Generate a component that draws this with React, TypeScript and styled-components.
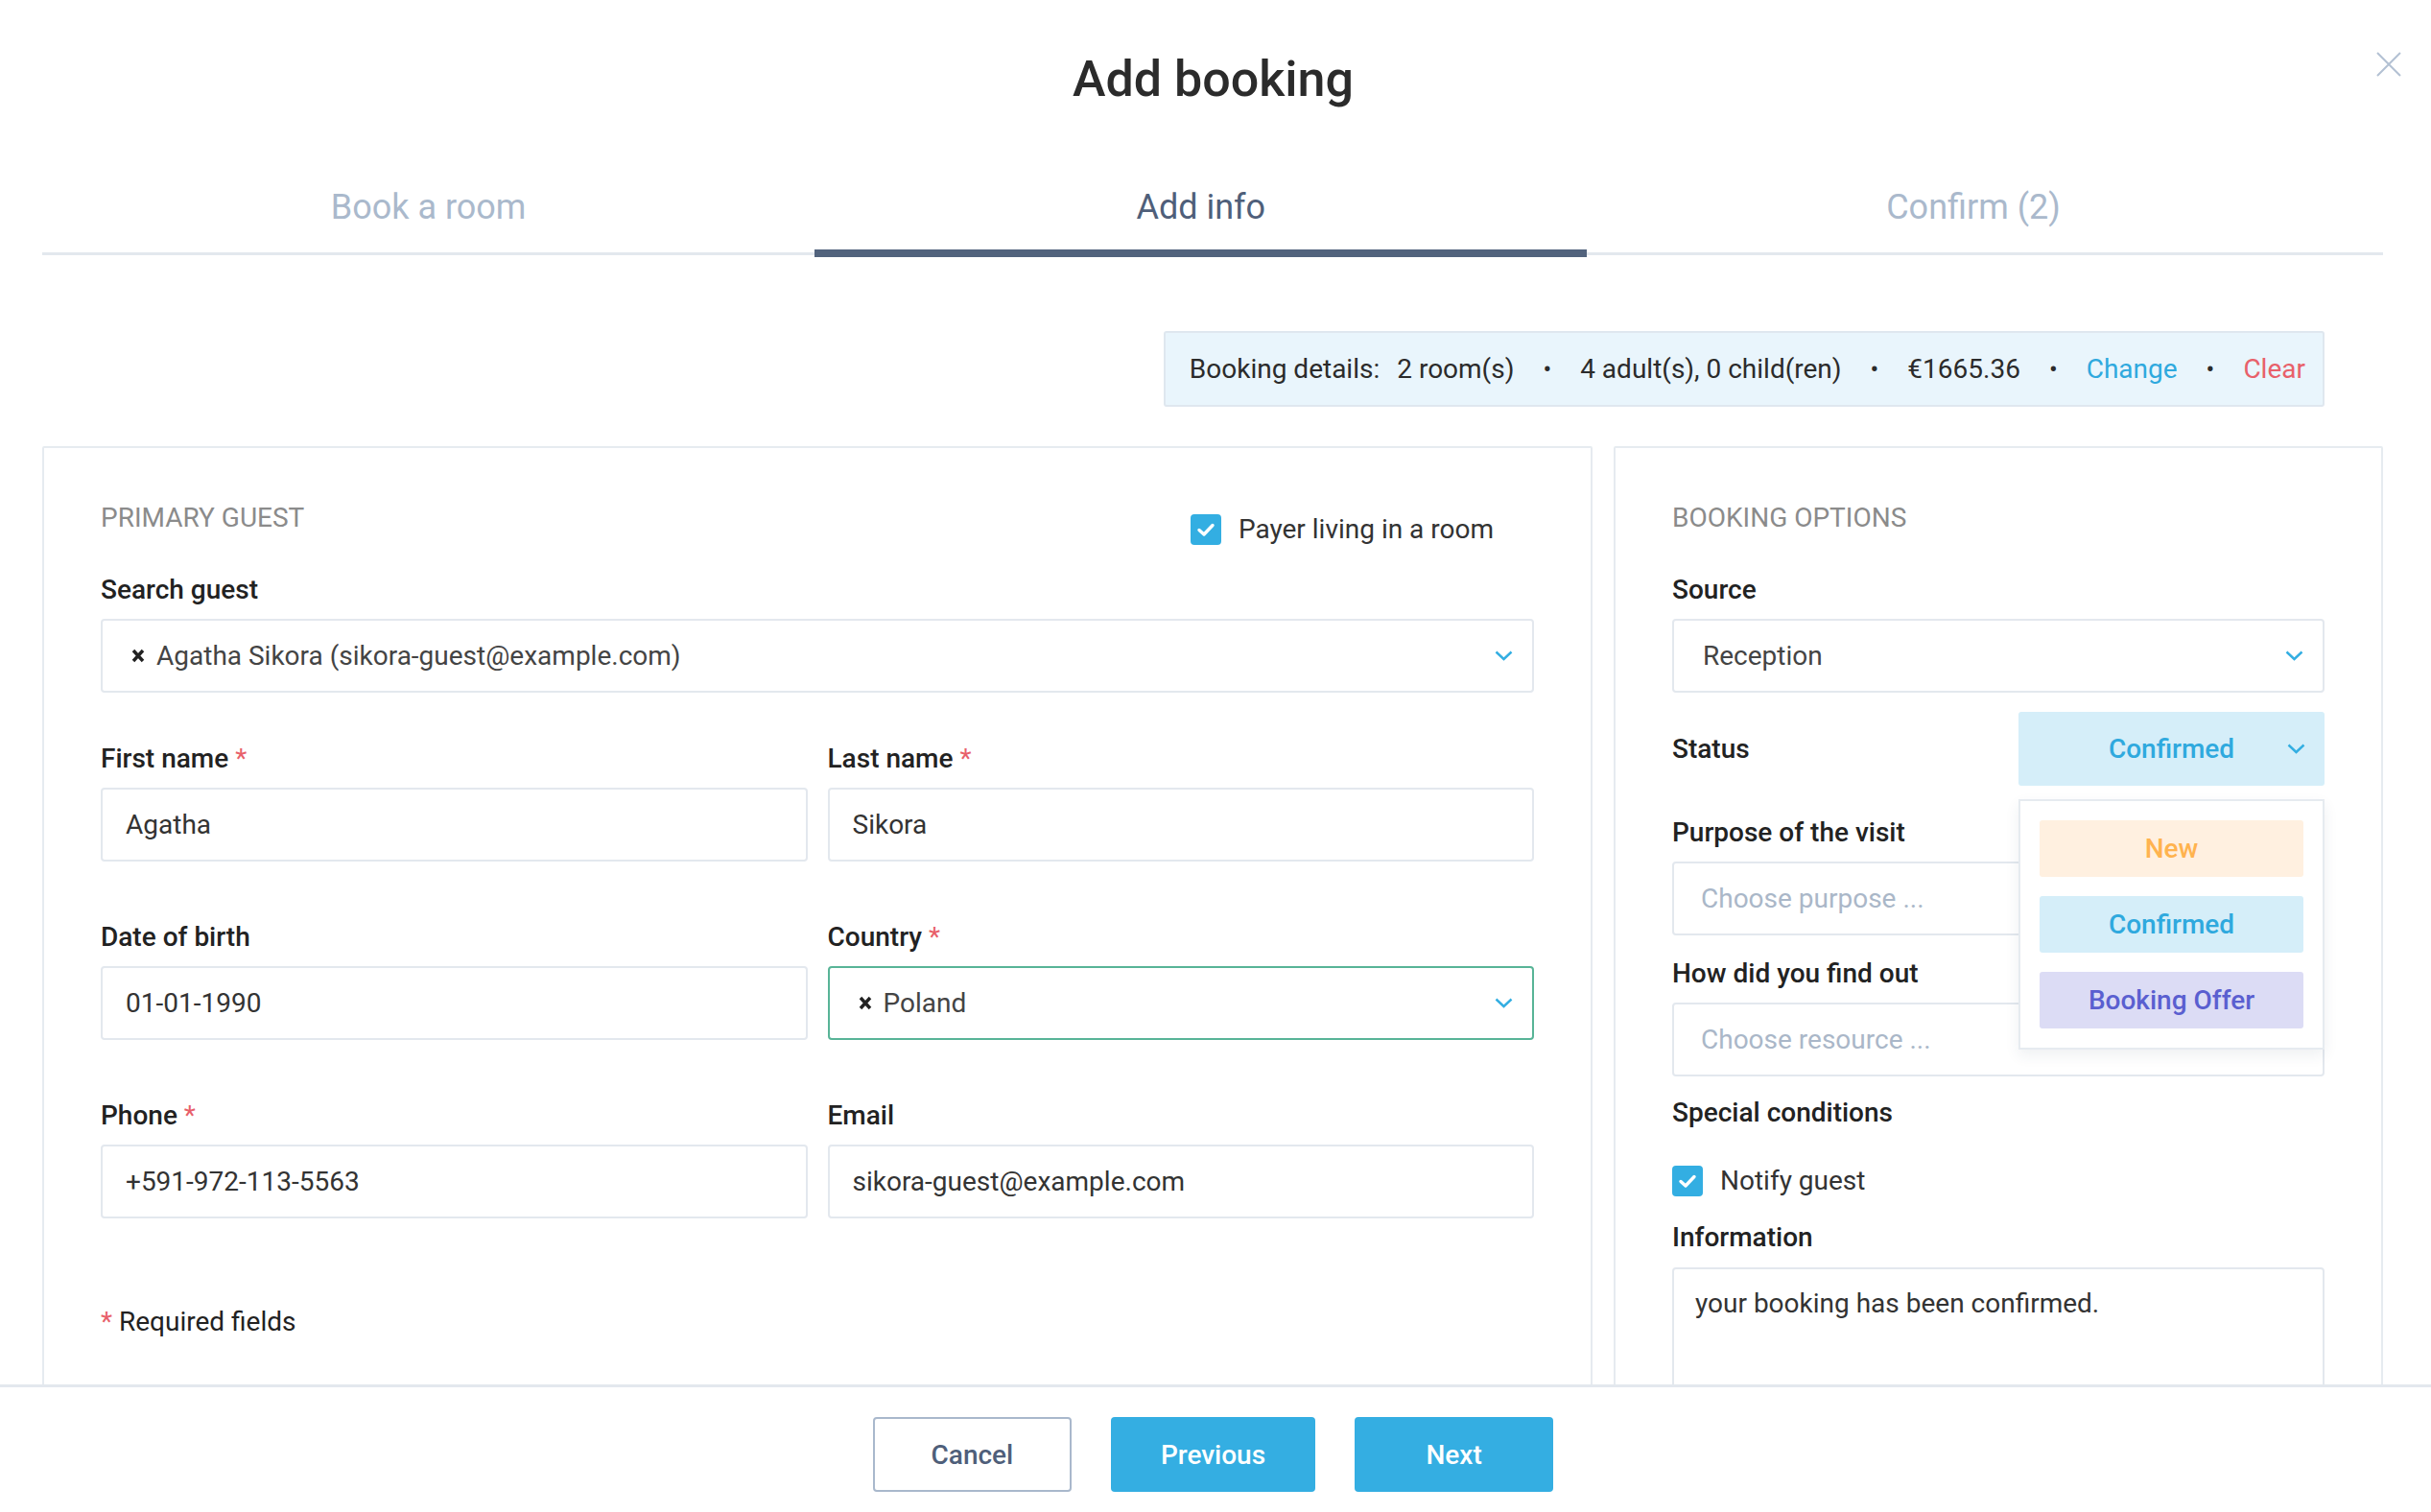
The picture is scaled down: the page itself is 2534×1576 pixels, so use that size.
import styled, { createGlobalStyle, css } from "styled-components";

const GlobalStyle = createGlobalStyle`
  html, body {
    margin: 0;
    padding: 0;
  }
  body {
    font-family: Roboto, "Liberation Sans", Arial, sans-serif;
    background: #fff;
    color: #2b2b2b;
  }
  * {
    box-sizing: border-box;
  }
`;

const Page = styled.div`
  position: relative;
  height: 100vh;
  display: flex;
  flex-direction: column;
  overflow: hidden;
`;

const Header = styled.header`
  padding: 52px 5px 0 0;
  text-align: center;
`;

const Title = styled.h1`
  margin: 0;
  font-size: 52px;
  line-height: 62px;
  font-weight: 500;
  color: #2b2b2b;
`;

const CloseButton = styled.button`
  position: absolute;
  top: 54px;
  right: 31px;
  width: 26px;
  height: 26px;
  padding: 0;
  border: 0;
  background: none;
  cursor: pointer;
`;

const TabBar = styled.nav`
  margin: 80px 50px 0 44px;
  display: flex;
  border-bottom: 3px solid #e3e8ee;
`;

const Tab = styled.div<{ $active?: boolean }>`
  flex: 0 0 33%;
  position: relative;
  padding-bottom: 25px;
  text-align: center;
  font-size: 36px;
  line-height: 44px;
  color: ${(p) => (p.$active ? "#4f5f7a" : "#aab9cc")};
  ${(p) =>
    p.$active &&
    css`
      &::after {
        content: "";
        position: absolute;
        left: 0;
        right: 0;
        bottom: -5px;
        height: 8px;
        background: #52637d;
      }
    `}
`;

const Body = styled.main`
  flex: 1;
  min-height: 0;
  overflow: hidden;
  padding: 0 50px 0 44px;
`;

const SummaryRow = styled.div`
  display: flex;
  justify-content: flex-end;
  margin-top: 79px;
  padding-right: 61px;
`;

const Summary = styled.div`
  height: 79px;
  display: flex;
  align-items: center;
  padding: 0 18px 0 25px;
  background: #e9f5fc;
  border: 2px solid #dfe7ef;
  border-radius: 3px;
  font-size: 28px;
  color: #2b2b2b;
  white-space: nowrap;
`;

const SummaryLabel = styled.span`
  margin-right: 18px;
`;

const Dot = styled.span`
  margin: 0 30px;
  font-size: 26px;
`;

const SummaryLink = styled.a<{ $danger?: boolean }>`
  color: ${(p) => (p.$danger ? "#e8606a" : "#2fa9de")};
  text-decoration: none;
  cursor: pointer;
`;

const Columns = styled.div`
  margin-top: 41px;
  display: grid;
  grid-template-columns: minmax(0, 1616fr) minmax(0, 802fr);
  gap: 22px;
  align-items: start;
`;

const Card = styled.section`
  border: 2px solid #e6ebf0;
  border-radius: 2px;
  padding: 56px 59px 120px;
`;

const SectionHead = styled.div`
  display: flex;
  justify-content: space-between;
  align-items: flex-start;
  height: 45px;
  margin-bottom: 30px;
`;

const SectionTitle = styled.h2`
  margin: 0;
  font-size: 28px;
  line-height: 34px;
  font-weight: 400;
  text-transform: uppercase;
  color: #8b8b8b;
`;

const CheckRow = styled.label<{ $mt?: number; $mr?: number }>`
  display: flex;
  align-items: center;
  gap: 18px;
  margin-top: ${(p) => p.$mt ?? 0}px;
  margin-right: ${(p) => p.$mr ?? 0}px;
  font-size: 28px;
  line-height: 34px;
  color: #333;
`;

const Box = styled.span`
  width: 32px;
  height: 32px;
  border-radius: 4px;
  background: #33aee2;
  display: flex;
  align-items: center;
  justify-content: center;
  flex: none;
`;

const Field = styled.div<{ $mt?: number; $mb?: number }>`
  margin-top: ${(p) => p.$mt ?? 0}px;
  margin-bottom: ${(p) => p.$mb ?? 0}px;
`;

const Label = styled.div<{ $mb?: number }>`
  font-size: 28px;
  line-height: 34px;
  font-weight: 500;
  color: #222;
  margin-bottom: ${(p) => p.$mb ?? 13}px;
`;

const Req = styled.span`
  color: #e8606a;
  font-weight: 400;
`;

const Control = styled.div<{ $focus?: boolean; $placeholder?: boolean }>`
  height: 77px;
  display: flex;
  align-items: center;
  gap: 12px;
  padding: 0 20px 0 ${(p) => (p.$placeholder ? 28 : 30)}px;
  border: 2px solid ${(p) => (p.$focus ? "#58b497" : "#e3e8ee")};
  border-radius: 4px;
  font-size: 28px;
  color: ${(p) => (p.$placeholder ? "#aab7c8" : "#444")};
  background: #fff;
`;

const Value = styled.span`
  flex: 1;
  white-space: nowrap;
  overflow: hidden;
`;

const Input = styled.input`
  display: block;
  width: 100%;
  height: 77px;
  padding: 0 24px;
  border: 2px solid #e3e8ee;
  border-radius: 4px;
  font-family: inherit;
  font-size: 28px;
  color: #333;
  outline: none;
`;

const Grid = styled.div`
  display: grid;
  grid-template-columns: 1fr 1fr;
  column-gap: 21px;
  row-gap: 62px;
`;

const RequiredNote = styled.div`
  margin-top: 91px;
  font-size: 28px;
  line-height: 34px;
  color: #222;
`;

const StatusRow = styled.div`
  margin-top: 20px;
  display: flex;
  justify-content: space-between;
  align-items: center;
`;

const StatusWrap = styled.div`
  position: relative;
  width: 319px;
`;

const StatusSelect = styled.div`
  height: 77px;
  display: grid;
  grid-template-columns: 1fr auto 1fr;
  align-items: center;
  padding: 0 20px;
  background: #d5eef9;
  border-radius: 3px;
  font-size: 28px;
  font-weight: 500;
  color: #2fa9de;
  > svg {
    justify-self: end;
  }
`;

const Menu = styled.div`
  position: absolute;
  top: calc(100% + 14px);
  left: 0;
  right: 0;
  z-index: 2;
  display: flex;
  flex-direction: column;
  gap: 20px;
  padding: 20px;
  background: #fff;
  border: 2px solid #e6ebf0;
  box-shadow: 0 6px 14px rgba(40, 60, 90, 0.08);
`;

const tones = {
  new: { bg: "#fff0e0", fg: "#ffb34f" },
  confirmed: { bg: "#d5eef9", fg: "#2fa9de" },
  offer: { bg: "#dcdcf5", fg: "#5a5fd0" },
};

const Option = styled.div<{ $tone: keyof typeof tones }>`
  height: 59px;
  display: flex;
  align-items: center;
  justify-content: center;
  border-radius: 3px;
  font-size: 28px;
  font-weight: 500;
  background: ${(p) => tones[p.$tone].bg};
  color: ${(p) => tones[p.$tone].fg};
`;

const TextArea = styled.div`
  margin-top: 14px;
  height: 220px;
  padding: 19px 22px;
  border: 2px solid #e3e8ee;
  border-radius: 4px;
  font-size: 28px;
  line-height: 34px;
  color: #333;
`;

const Footer = styled.footer`
  height: 133px;
  flex: none;
  display: flex;
  justify-content: center;
  align-items: flex-start;
  gap: 41px;
  padding: 31px 5px 0 0;
  border-top: 3px solid #e3e8ee;
  background: #fff;
`;

const Button = styled.button<{ $primary?: boolean }>`
  height: 78px;
  min-width: 207px;
  padding: 0 52px;
  border-radius: 4px;
  font-family: inherit;
  font-size: 28px;
  font-weight: 500;
  cursor: pointer;
  ${(p) =>
    p.$primary
      ? css`
          border: 0;
          background: #34aee2;
          color: #fff;
        `
      : css`
          border: 2px solid #a9b8cc;
          background: #fff;
          color: #4f5f7a;
        `}
`;

const Chevron = () => (
  <svg width="19" height="11" viewBox="0 0 19 11" fill="none">
    <path d="M1.5 1.5 L9.5 9 L17.5 1.5" stroke="#33aee2" strokeWidth="2.4" />
  </svg>
);

const ClearX = () => (
  <svg width="14" height="15" viewBox="0 0 14 15" fill="none">
    <path d="M2 2 L12 13 M12 2 L2 13" stroke="#222" strokeWidth="3.4" />
  </svg>
);

const Check = () => (
  <svg width="20" height="16" viewBox="0 0 20 16" fill="none">
    <path d="M3 8.5 L8 13 L17 3.5" stroke="#fff" strokeWidth="3.4" strokeLinecap="round" strokeLinejoin="round" />
  </svg>
);

const Select = ({ value, clearable, focus, placeholder }: { value: string; clearable?: boolean; focus?: boolean; placeholder?: boolean }) => (
  <Control $focus={focus} $placeholder={placeholder}>
    {clearable && <ClearX />}
    <Value>{value}</Value>
    <Chevron />
  </Control>
);

const App = () => {
  return (
    <Page>
      <GlobalStyle />
      <Header>
        <Title>Add booking</Title>
      </Header>
      <CloseButton aria-label="Close">
        <svg width="26" height="26" viewBox="0 0 26 26" fill="none">
          <path d="M1 1 L25 25 M25 1 L1 25" stroke="#b3c1d3" strokeWidth="2" />
        </svg>
      </CloseButton>

      <TabBar>
        <Tab>Book a room</Tab>
        <Tab $active>Add info</Tab>
        <Tab>Confirm (2)</Tab>
      </TabBar>

      <Body>
        <SummaryRow>
          <Summary>
            <SummaryLabel>Booking details:</SummaryLabel>
            <span>2 room(s)</span>
            <Dot>•</Dot>
            <span>4 adult(s), 0 child(ren)</span>
            <Dot>•</Dot>
            <span>€1665.36</span>
            <Dot>•</Dot>
            <SummaryLink>Change</SummaryLink>
            <Dot>•</Dot>
            <SummaryLink $danger>Clear</SummaryLink>
          </Summary>
        </SummaryRow>

        <Columns>
          <Card>
            <SectionHead>
              <SectionTitle>Primary guest</SectionTitle>
              <CheckRow $mt={12} $mr={42}>
                <Box>
                  <Check />
                </Box>
                Payer living in a room
              </CheckRow>
            </SectionHead>

            <Field $mb={52}>
              <Label>Search guest</Label>
              <Select value="Agatha Sikora (sikora-guest@example.com)" clearable />
            </Field>

            <Grid>
              <Field>
                <Label>
                  First name <Req>*</Req>
                </Label>
                <Input defaultValue="Agatha" />
              </Field>
              <Field>
                <Label>
                  Last name <Req>*</Req>
                </Label>
                <Input defaultValue="Sikora" />
              </Field>
              <Field>
                <Label>Date of birth</Label>
                <Input defaultValue="01-01-1990" />
              </Field>
              <Field>
                <Label>
                  Country <Req>*</Req>
                </Label>
                <Select value="Poland" clearable focus />
              </Field>
              <Field>
                <Label>
                  Phone <Req>*</Req>
                </Label>
                <Input defaultValue="+591-972-113-5563" />
              </Field>
              <Field>
                <Label>Email</Label>
                <Input defaultValue="sikora-guest@example.com" />
              </Field>
            </Grid>

            <RequiredNote>
              <Req>*</Req> Required fields
            </RequiredNote>
          </Card>

          <Card>
            <SectionHead>
              <SectionTitle>Booking options</SectionTitle>
            </SectionHead>

            <Field>
              <Label>Source</Label>
              <Select value="Reception" />
            </Field>

            <StatusRow>
              <Label $mb={0}>Status</Label>
              <StatusWrap>
                <StatusSelect>
                  <span />
                  <span>Confirmed</span>
                  <Chevron />
                </StatusSelect>
                <Menu>
                  <Option $tone="new">New</Option>
                  <Option $tone="confirmed">Confirmed</Option>
                  <Option $tone="offer">Booking Offer</Option>
                </Menu>
              </StatusWrap>
            </StatusRow>

            <Field $mt={32}>
              <Label>Purpose of the visit</Label>
              <Select value="Choose purpose ..." placeholder />
            </Field>

            <Field $mt={23}>
              <Label>How did you find out</Label>
              <Select value="Choose resource ..." placeholder />
            </Field>

            <Field $mt={21}>
              <Label $mb={0}>Special conditions</Label>
            </Field>

            <CheckRow $mt={37}>
              <Box>
                <Check />
              </Box>
              Notify guest
            </CheckRow>

            <Field $mt={25}>
              <Label $mb={0}>Information</Label>
              <TextArea>your booking has been confirmed.</TextArea>
            </Field>
          </Card>
        </Columns>
      </Body>

      <Footer>
        <Button>Cancel</Button>
        <Button $primary>Previous</Button>
        <Button $primary>Next</Button>
      </Footer>
    </Page>
  );
};

export default App;
